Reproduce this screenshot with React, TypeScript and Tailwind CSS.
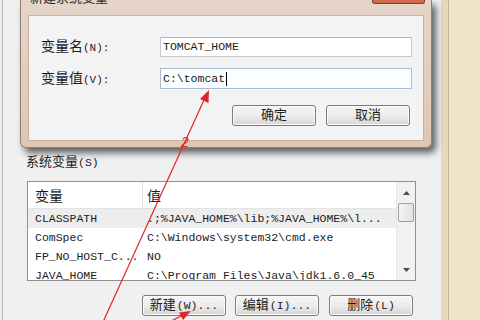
import React from 'react';

const rows = [
  { name: 'CLASSPATH', value: '.;%JAVA_HOME%\\lib;%JAVA_HOME%\\l...', sel: true },
  { name: 'ComSpec', value: 'C:\\Windows\\system32\\cmd.exe' },
  { name: 'FP_NO_HOST_C...', value: 'NO' },
  { name: 'JAVA_HOME', value: 'C:\\Program Files\\Java\\jdk1.6.0_45' },
];

function WinButton({ label, hot, className = '' }: { label: string; hot?: string; className?: string }) {
  return (
    <div
      className={`h-[21px] w-[84px] rounded-[3px] border border-[#7c7c7c] bg-gradient-to-b from-[#f6f6f6] via-[#ececec] to-[#d6d6d6] shadow-[inset_0_0_0_1px_#fbfbfb] flex items-center justify-center text-[13px] leading-none ${className}`}
    >
      <span>{label}</span>
      {hot && <span className="text-[11.5px] ml-[1px]">{hot}</span>}
    </div>
  );
}

function Arrow({ down }: { down?: boolean }) {
  return (
    <svg width="7" height="4" viewBox="0 0 7 4">
      <path d={down ? 'M0 0 H7 L3.5 4 Z' : 'M0 4 H7 L3.5 0 Z'} fill="#4d4d4d" />
    </svg>
  );
}

export default function App() {
  return (
    <div className="relative w-[480px] h-[320px] overflow-hidden bg-[#efe3c8] font-['Liberation_Mono','Noto_Sans_CJK_SC',monospace] text-[#1c1c1c]">
      <div className="flex h-full">
        {/* 环境变量 dialog behind */}
        <div className="w-[449px] h-full flex bg-[#e7d7bb] border-r border-[#c8b38f]">
          <div className="w-[2px] bg-[#ebebeb]" />
          <div className="flex-1 mr-[7px] flex flex-col bg-[#f0f0f0] border-l border-[#b9b9b9] pt-[156px] pl-[23px]">
            <div className="h-[14px] leading-[14px] text-[13px]">
              系统变量<span className="text-[11.5px]">(S)</span>
            </div>

            <div className="ml-px mt-[11px] w-[389px] h-[100px] border border-[#8f9092] bg-white flex overflow-hidden">
              <div className="flex-1 flex flex-col text-[11.5px]">
                <div className="h-[27px] shrink-0 flex border-b border-[#e3e3e3] text-[14px]">
                  <div className="w-[115px] pl-[7px] flex items-center pt-[4px] border-r border-[#e3e3e3]">变量</div>
                  <div className="flex-1 pl-[4px] flex items-center pt-[4px]">值</div>
                </div>
                {rows.map((r) => (
                  <div key={r.name} className={`h-[19px] shrink-0 flex items-center whitespace-nowrap ${r.sel ? 'bg-[#ededed]' : ''}`}>
                    <div className="w-[115px] pl-[7px] overflow-hidden">{r.name}</div>
                    <div className="flex-1 pl-[4px] overflow-hidden">{r.value}</div>
                  </div>
                ))}
              </div>
              <div className="w-[19px] shrink-0 flex flex-col bg-[#f1f1f1] border-l border-[#e6e6e6]">
                <div className="h-[21px] flex items-center justify-center">
                  <Arrow />
                </div>
                <div className="mx-[1px] h-[19px] rounded-[2px] border border-[#a0a0a0] bg-gradient-to-r from-[#f4f4f4] to-[#e2e2e2]" />
                <div className="flex-1" />
                <div className="h-[21px] flex items-center justify-center">
                  <Arrow down />
                </div>
              </div>
            </div>

            <div className="mt-[14px] w-[389px] flex pl-[116px]">
              <WinButton label="新建" hot="(W)..." />
              <WinButton label="编辑" hot="(I)..." className="ml-[9px]" />
              <WinButton label="删除" hot="(L)" className="ml-[10px]" />
            </div>
          </div>
        </div>
      </div>

      {/* 新建系统变量 dialog */}
      <div className="absolute left-[20px] top-0 w-[412px] h-[148px] rounded-b-[6px] bg-gradient-to-b from-[#e6d5ca] to-[#e0c6b0] border border-t-0 border-[#8f7f72] shadow-[4px_5px_7px_rgba(0,0,0,0.6)] flex flex-col">
        <div className="relative h-[15px] overflow-hidden">
          <div className="-mt-[8px] ml-[9px] text-[13px] leading-[14px] text-[#2b2b2b]">新建系统变量</div>
          <div className="absolute right-[6px] top-0 w-[53px] h-[4px] rounded-b-[3px] bg-[#cf6a4e] border border-t-0 border-[#8a3a2a]" />
        </div>
        <div className="mx-[7px] mb-[6px] flex-1 bg-[#f3f3f3] border border-[#c8b3a2] pt-[21px] pl-[12px] pr-[11px] flex flex-col">
          <div className="flex items-center h-[20px]">
            <div className="w-[119px] text-[14px] leading-none">
              变量名<span className="text-[11px]">(N):</span>
            </div>
            <div className="w-[252px] h-[20px] bg-white border border-[#c9c9c9] border-t-[#b5b5b5] pl-[2px] flex items-center text-[11.5px]">
              TOMCAT_HOME
            </div>
          </div>
          <div className="flex items-center h-[21px] mt-[11px]">
            <div className="w-[119px] text-[14px] leading-none">
              变量值<span className="text-[11px]">(V):</span>
            </div>
            <div className="w-[252px] h-[21px] bg-[#fbfdff] border border-[#a6bdd3] pl-[2px] flex items-center text-[11.5px]">
              C:\tomcat<span className="w-px h-[14px] bg-black ml-px" />
            </div>
          </div>
          <div className="mt-[16px] flex justify-end pr-[2px]">
            <WinButton label="确定" />
            <WinButton label="取消" className="ml-[10px]" />
          </div>
        </div>
      </div>

      {/* red annotation */}
      <svg className="absolute inset-0 pointer-events-none" width="480" height="320" viewBox="0 0 480 320">
        <line x1="103" y1="322" x2="204" y2="100" stroke="#e0242a" strokeWidth="1.2" />
        <path d="M209 90 L200 99 L208.5 103 Z" fill="#e0242a" />
        <text x="181" y="147" fill="#e0242a" fontSize="14" fontStyle="italic" fontFamily="Liberation Sans, sans-serif">2</text>
        <line x1="150" y1="332" x2="183" y2="315" stroke="#e0242a" strokeWidth="1.2" />
        <path d="M191 311 L179 312.5 L183 320 Z" fill="#e0242a" />
      </svg>
    </div>
  );
}
